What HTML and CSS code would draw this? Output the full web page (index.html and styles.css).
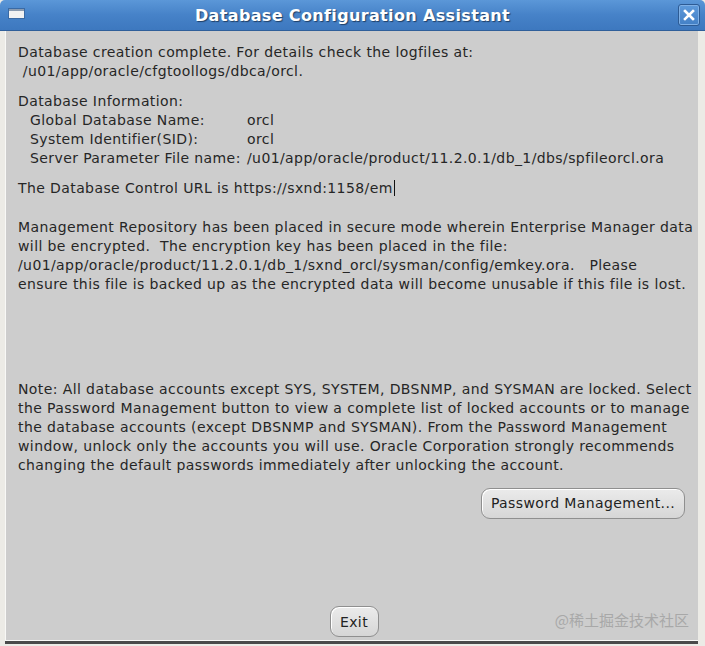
FILE: index.html
```html
<!DOCTYPE html>
<html>
<head>
<meta charset="utf-8">
<link rel="stylesheet" href="styles.css">
</head>
<body>
<div class="window">
  <div class="titlebar">
    <span class="menu-icon"><span class="menu-icon-bar"></span></span>
    <span class="title">Database Configuration Assistant</span>
    <span class="close-btn">
      <svg width="12" height="12" viewBox="0 0 12 12"><path d="M2 2 L10 10 M10 2 L2 10" stroke="#ffffff" stroke-width="2.6" stroke-linecap="square"/></svg>
    </span>
  </div>
  <div class="frame">
    <div class="content">
      <div class="block">
        <div class="line">Database creation complete. For details check the logfiles at:</div>
        <div class="line">&nbsp;/u01/app/oracle/cfgtoollogs/dbca/orcl.</div>
      </div>
      <div class="block gap-s">
        <div class="line">Database Information:</div>
        <div class="info">
          <span>Global Database Name:</span><span>orcl</span>
          <span>System Identifier(SID):</span><span>orcl</span>
          <span>Server Parameter File name:</span><span>/u01/app/oracle/product/11.2.0.1/db_1/dbs/spfileorcl.ora</span>
        </div>
      </div>
      <div class="block gap-s">
        <div class="line">The Database Control URL is https://sxnd:1158/em<span class="caret"></span></div>
      </div>
      <div class="block gap-m">
        <div class="line">Management Repository has been placed in secure mode wherein Enterprise Manager data</div>
        <div class="line">will be encrypted.&nbsp; The encryption key has been placed in the file:</div>
        <div class="line">/u01/app/oracle/product/11.2.0.1/db_1/sxnd_orcl/sysman/config/emkey.ora.&nbsp;&nbsp; Please</div>
        <div class="line">ensure this file is backed up as the encrypted data will become unusable if this file is lost.</div>
      </div>
      <div class="block gap-l">
        <div class="line">Note: All database accounts except SYS, SYSTEM, DBSNMP, and SYSMAN are locked. Select</div>
        <div class="line">the Password Management button to view a complete list of locked accounts or to manage</div>
        <div class="line">the database accounts (except DBSNMP and SYSMAN). From the Password Management</div>
        <div class="line">window, unlock only the accounts you will use. Oracle Corporation strongly recommends</div>
        <div class="line">changing the default passwords immediately after unlocking the account.</div>
      </div>
      <div class="btn-row">
        <span class="btn pwd-btn">Password Management...</span>
      </div>
    </div>
    <div class="footer">
      <span class="btn exit-btn">Exit</span>
      <span class="watermark">@稀土掘金技术社区</span>
    </div>
  </div>
</div>
</body>
</html>
```
FILE: styles.css
```css
html, body {
  margin: 0;
  padding: 0;
  background: #ecebe6;
}
.window {
  width: 705px;
  height: 646px;
  display: flex;
  flex-direction: column;
  background: #ecebe6;
  font-family: "DejaVu Sans", sans-serif;
}
.titlebar {
  height: 31px;
  flex: none;
  display: flex;
  align-items: center;
  position: relative;
  background: linear-gradient(#5b97d8, #4682c8 50%, #3d78bf);
  border-radius: 5px 5px 0 0;
  border-bottom: 1px solid #2f5f9a;
  box-sizing: border-box;
}
.menu-icon {
  position: absolute;
  left: 8px;
  top: 8px;
  width: 17px;
  height: 11px;
  background: #f2f2f2;
  border: 1px solid #3a6aa4;
  box-sizing: border-box;
}
.menu-icon-bar {
  display: block;
  height: 2px;
  background: #8a9bb0;
}
.title {
  flex: 1;
  text-align: center;
  color: #ffffff;
  font-weight: bold;
  font-size: 16px;
  letter-spacing: 0.35px;
  text-shadow: 1px 1px 1px #1f3f66;
}
.close-btn {
  position: absolute;
  right: 5px;
  top: 4px;
  width: 22px;
  height: 22px;
  box-sizing: border-box;
  border: 1px solid #2d5b94;
  border-radius: 3px;
  background: linear-gradient(#5e9adb, #4380c6);
  display: flex;
  align-items: center;
  justify-content: center;
  box-shadow: inset 0 0 0 1px #7fb0e6;
}
.frame {
  flex: 1;
  display: flex;
  flex-direction: column;
  background: #cdcdcd;
  margin: 0 7px 5px 5px;
  border-left: 1px solid #f8f8f6;
  border-bottom: 1px solid #f8f8f6;
  box-shadow: 0 3px 0 0 #4a4a4a;
}
.content {
  flex: 1;
  padding: 12px 0 0 12px;
  color: #262626;
  font-size: 14px;
  letter-spacing: 0.4px;
  line-height: 19px;
}
.line {
  white-space: pre;
}
.gap-s { margin-top: 11px; }
.gap-m { margin-top: 20px; }
.gap-l { margin-top: 86px; }
.info {
  display: grid;
  grid-template-columns: 217px auto;
  padding-left: 12px;
  white-space: pre;
}
.caret {
  display: inline-block;
  width: 1px;
  height: 16px;
  background: #111;
  vertical-align: -3px;
  margin-left: 1px;
}
.btn {
  display: inline-flex;
  align-items: center;
  justify-content: center;
  box-sizing: border-box;
  border: 1px solid #8f8f8f;
  border-radius: 9px;
  background: linear-gradient(#ebebeb, #d6d6d6);
  box-shadow: inset 1px 1px 0 #ffffff;
  color: #222;
  font-size: 14px;
  letter-spacing: 0.4px;
}
.btn-row {
  display: flex;
  justify-content: flex-end;
  padding-right: 13px;
  margin-top: 13px;
}
.pwd-btn {
  width: 204px;
  height: 31px;
}
.footer {
  height: 45px;
  flex: none;
  display: flex;
  align-items: flex-end;
  justify-content: center;
  padding-bottom: 3px;
  position: relative;
}
.exit-btn {
  width: 49px;
  height: 31px;
  margin-left: 4px;
}
.watermark {
  position: absolute;
  right: 9px;
  bottom: 10px;
  font-family: "Noto Sans CJK SC", sans-serif;
  font-size: 15px;
  color: #a8a8a8;
}
```
